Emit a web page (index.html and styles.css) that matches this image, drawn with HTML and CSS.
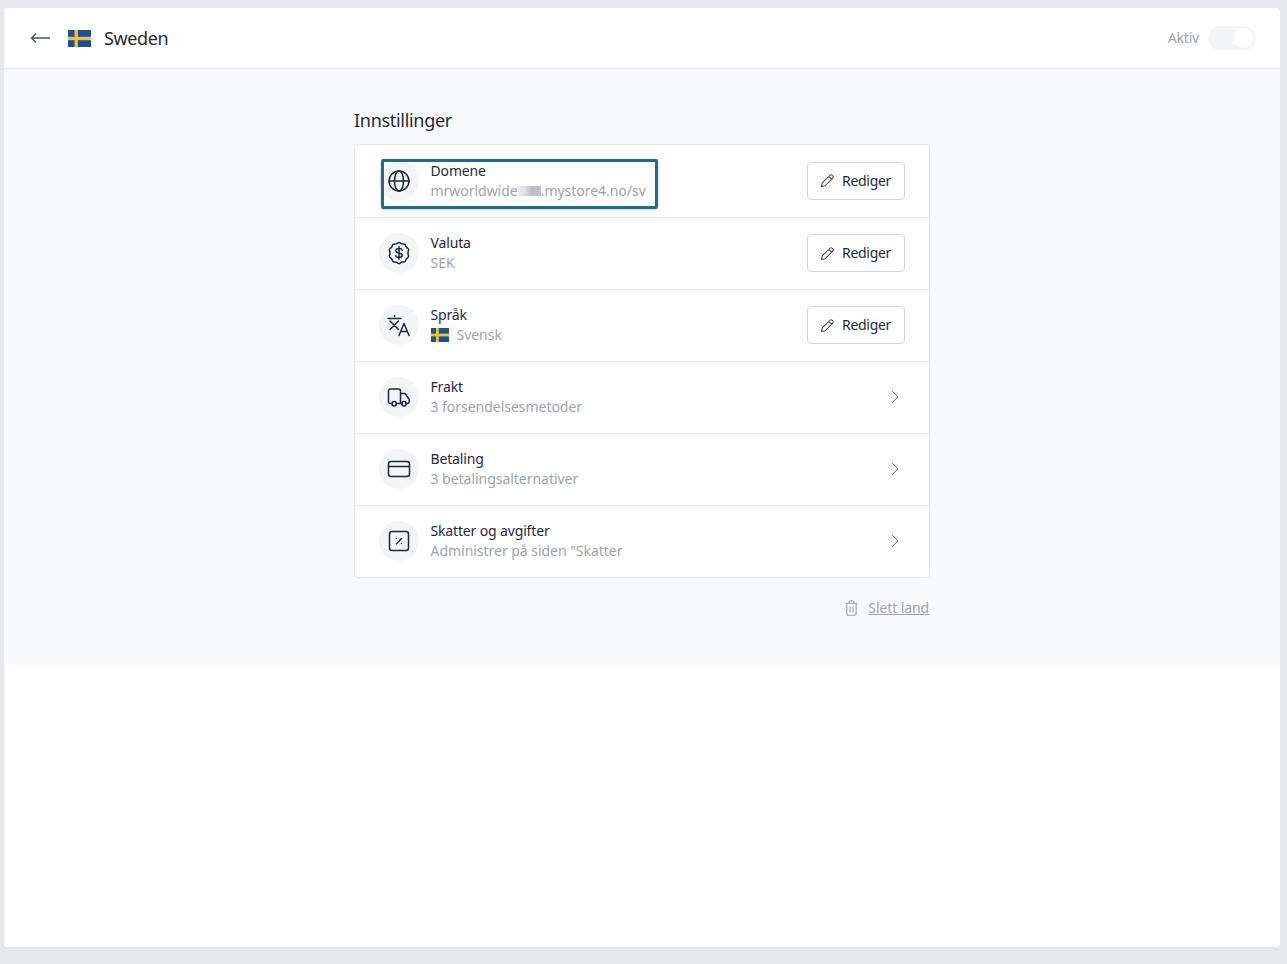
FILE: index.html
```html
<!DOCTYPE html>
<html lang="no">
<head>
<meta charset="utf-8">
<title>Sweden</title>
<link rel="stylesheet" href="styles.css">
</head>
<body>
<div class="panel">
  <header class="topbar">
    <div class="topbar-left">
      <svg class="back" width="20" height="12" viewBox="0 0 20 12" fill="none" stroke="#4b5563" stroke-width="1.5"><path d="M20 6H1.5M6 1.500 1.500 6 6 10.500"/></svg>
      <svg class="flag-lg" viewBox="0 0 23 17"><rect width="23" height="17" fill="#1f4f91"/><rect x="6.500" width="3.400" height="17" fill="#f2c230"/><rect y="6.800" width="23" height="3.400" fill="#f2c230"/></svg>
      <span class="country">Sweden</span>
    </div>
    <div class="topbar-right">
      <span class="active-label">Aktiv</span>
      <span class="toggle"><span class="knob"></span></span>
    </div>
  </header>
  <main class="content">
    <div class="column">
      <h2 class="heading">Innstillinger</h2>
      <div class="card">
        <div class="row">
          <span class="icon-wrap"><svg class="icon" viewBox="0 0 24 24"><circle cx="12" cy="12" r="10"/><ellipse cx="12" cy="12" rx="4.500" ry="10"/><path d="M2 12h20"/></svg></span>
          <div class="text">
            <div class="title">Domene</div>
            <div class="sub">mrworldwide<span class="blur"></span>.mystore4.no/sv</div>
          </div>
          <button class="edit"><svg class="pen" viewBox="0 0 16 16"><path d="M1.500 14.500l.9-3.900 8.200-8.200a1.700 1.700 0 0 1 2.400 0l.6.600a1.700 1.700 0 0 1 0 2.400l-8.200 8.200-3.900.9zM9.400 3.600l3 3"/></svg>Rediger</button>
          <span class="highlight"></span>
        </div>
        <div class="row">
          <span class="icon-wrap"><svg class="icon" viewBox="0 0 24 24"><path d="M12 1.500c1 0 1.800 1.100 2.800 1.400 1 .3 2.300-.1 3.100.5.800.6.800 1.900 1.400 2.700.6.800 1.900 1.200 2.200 2.200.3 1-.5 2.100-.5 3.700s.8 2.700.5 3.700c-.3 1-1.600 1.400-2.200 2.200-.6.800-.6 2.100-1.400 2.700-.8.600-2.100.200-3.100.5-1 .3-1.800 1.400-2.800 1.400s-1.800-1.100-2.800-1.400c-1-.3-2.300.1-3.100-.5-.8-.6-.8-1.900-1.400-2.700-.6-.8-1.900-1.200-2.200-2.200-.3-1 .5-2.100.5-3.700s-.8-2.700-.5-3.700c.3-1 1.600-1.400 2.200-2.200.6-.8.6-2.100 1.400-2.700.8-.6 2.100-.2 3.100-.5 1-.3 1.800-1.400 2.800-1.400z"/><path d="M15.200 9.200c-.4-1.100-1.700-1.700-3.200-1.700-1.800 0-3.200.9-3.200 2.200 0 3 6.400 1.600 6.400 4.600 0 1.300-1.400 2.200-3.200 2.200-1.500 0-2.800-.6-3.200-1.700M12 5.800v12.400"/></svg></span>
          <div class="text">
            <div class="title">Valuta</div>
            <div class="sub">SEK</div>
          </div>
          <button class="edit"><svg class="pen" viewBox="0 0 16 16"><path d="M1.500 14.500l.9-3.900 8.200-8.200a1.700 1.700 0 0 1 2.400 0l.6.600a1.700 1.700 0 0 1 0 2.400l-8.200 8.200-3.900.9zM9.400 3.600l3 3"/></svg>Rediger</button>
        </div>
        <div class="row">
          <span class="icon-wrap"><svg class="icon" viewBox="0 0 24 24"><path d="M1 5.500h13M7.500 2.500v1M3 8l8.500 8.500M11.500 8 3 16.500M12 22.500l5-12 5 12M13.800 18.500h6.400"/></svg></span>
          <div class="text">
            <div class="title">Språk</div>
            <div class="sub sub-flag"><svg class="flag-sm" viewBox="0 0 18 14"><rect width="18" height="14" fill="#1f4f91"/><rect x="5" width="2.800" height="14" fill="#f2c230"/><rect y="5.600" width="18" height="2.800" fill="#f2c230"/></svg>Svensk</div>
          </div>
          <button class="edit"><svg class="pen" viewBox="0 0 16 16"><path d="M1.500 14.500l.9-3.900 8.200-8.200a1.700 1.700 0 0 1 2.400 0l.6.600a1.700 1.700 0 0 1 0 2.400l-8.200 8.200-3.900.9zM9.400 3.600l3 3"/></svg>Rediger</button>
        </div>
        <div class="row">
          <span class="icon-wrap"><svg class="icon" viewBox="0 0 24 24"><path d="M5 18.500H3.500A2 2 0 0 1 1.500 16.500V6A2 2 0 0 1 3.500 4h8A2 2 0 0 1 13.500 6v12.500H9.500M13.500 8.500h3.600a2 2 0 0 1 1.700 1l3 4.300a2 2 0 0 1 .4 1.200v1.500a2 2 0 0 1-2 2h-1.200M14.500 18.500h.5"/><circle cx="7.200" cy="18.800" r="2.200"/><circle cx="17" cy="18.800" r="2.200"/></svg></span>
          <div class="text">
            <div class="title">Frakt</div>
            <div class="sub">3 forsendelsesmetoder</div>
          </div>
          <svg class="chevron" viewBox="0 0 10 14"><path d="M2 1l6 6-6 6"/></svg>
        </div>
        <div class="row">
          <span class="icon-wrap"><svg class="icon" viewBox="0 0 24 24"><rect x="1.500" y="4.500" width="21" height="15" rx="2.500"/><path d="M1.500 9.500h21"/></svg></span>
          <div class="text">
            <div class="title">Betaling</div>
            <div class="sub">3 betalingsalternativer</div>
          </div>
          <svg class="chevron" viewBox="0 0 10 14"><path d="M2 1l6 6-6 6"/></svg>
        </div>
        <div class="row">
          <span class="icon-wrap"><svg class="icon" viewBox="0 0 24 24"><rect x="2.500" y="2.500" width="19" height="19" rx="2.500"/><path d="M9.500 14.800l5-5.300M9.500 9.600h.01M14.500 14.600h.01"/></svg></span>
          <div class="text">
            <div class="title">Skatter og avgifter</div>
            <div class="sub">Administrer på siden "Skatter</div>
          </div>
          <svg class="chevron" viewBox="0 0 10 14"><path d="M2 1l6 6-6 6"/></svg>
        </div>
      </div>
      <div class="footer-action">
        <svg class="trash" viewBox="0 0 13 16"><path d="M.5 3.500h12M4.200 3.500V1.900a1 1 0 0 1 1-1h2.600a1 1 0 0 1 1 1v1.600M1.800 3.500v10.100a1.700 1.700 0 0 0 1.700 1.700h6a1.700 1.700 0 0 0 1.700-1.700V3.500M5 6.500v6M8 6.500v6"/></svg>
        <a class="delete" href="#">Slett land</a>
      </div>
    </div>
  </main>
</div>
</body>
</html>
```
FILE: styles.css
```css
* { box-sizing: border-box; }
html, body { height: 100%; }
body {
  margin: 0;
  padding: 8px 7px 17px 4px;
  background: #e5e7eb;
  font-family: "Noto Sans", "Open Sans", sans-serif;
  color: #1f2937;
  overflow: hidden;
}
.panel {
  height: 939px;
  background: #fff;
  border-radius: 4px;
  overflow: hidden;
}
.topbar {
  height: 61px;
  padding: 0 24px 1px 26px;
  display: flex;
  align-items: center;
  justify-content: space-between;
  border-bottom: 1px solid #e5e7eb;
}
.topbar-left { display: flex; align-items: center; }
.back { margin-right: 18px; }
.flag-lg { width: 23px; height: 17px; margin: 1px 13px 0 0; }
.country { font-size: 18px; line-height: 24px; color: #1f2937; letter-spacing: -0.4px; }
.topbar-right { display: flex; align-items: center; gap: 9px; }
.active-label { font-size: 14px; color: #9ca3af; letter-spacing: -0.2px; }
.toggle {
  width: 48px;
  height: 24px;
  border-radius: 12px;
  background: #f3f4f6;
  display: flex;
  justify-content: flex-end;
  padding: 2px 3px;
}
.knob { width: 20px; height: 20px; border-radius: 50%; background: #fff; }
.content {
  height: 597px;
  background: #f9fafb;
  display: flex;
  justify-content: center;
  padding-top: 39px;
}
.column { width: 576px; }
.heading {
  margin: 0 0 12px;
  font-size: 18px;
  line-height: 24px;
  font-weight: 400;
  color: #1f2937;
  letter-spacing: -0.3px;
}
.card {
  background: #fff;
  border: 1px solid #e5e7eb;
  border-radius: 4px;
}
.row {
  position: relative;
  height: 72px;
  display: flex;
  align-items: center;
  padding: 0 24px 1px;
  border-bottom: 1px solid #e5e7eb;
}
.row:first-child { height: 73px; }
.row:last-child { height: 71px; border-bottom: 0; }
.icon-wrap {
  width: 40px;
  height: 40px;
  border-radius: 50%;
  background: #f3f4f6;
  display: flex;
  align-items: center;
  justify-content: center;
  margin-right: 11.5px;
  flex: none;
}
.icon {
  width: 24px;
  height: 24px;
  fill: none;
  stroke: #1f2937;
  stroke-width: 1.500;
  stroke-linecap: round;
  stroke-linejoin: round;
}
.text { flex: 1; }
.title { font-size: 14px; line-height: 20px; color: #1f2937; letter-spacing: -0.15px; }
.sub { font-size: 14px; line-height: 20px; color: #9ca3af; letter-spacing: -0.03px; }
.sub-flag { display: flex; align-items: center; }
.flag-sm { width: 18px; height: 14px; margin-right: 8px; }
.blur {
  display: inline-block;
  width: 23px;
  height: 10px;
  background: linear-gradient(90deg, #eceef1 0%, #dfe1e7 30%, #b9bcc9 60%, #c0c3cf 100%);
}
.edit {
  display: flex;
  align-items: center;
  width: 98px;
  height: 38px;
  padding: 0 0 0 12px;
  background: #fff;
  border: 1px solid #d1d5db;
  border-radius: 4px;
  font: inherit;
  font-size: 14px;
  line-height: 20px;
  letter-spacing: -0.3px;
  color: #1f2937;
}
.pen {
  width: 15px;
  height: 15px;
  margin-right: 7px;
  fill: none;
  stroke: #374151;
  stroke-width: 1.100;
  stroke-linejoin: round;
}
.chevron {
  width: 10px;
  height: 14px;
  margin-right: 5px;
  fill: none;
  stroke: #6b7280;
  stroke-width: 1;
}
.highlight {
  position: absolute;
  left: 26px;
  top: 14px;
  width: 277px;
  height: 50px;
  border: 3px solid #236a85;
  border-radius: 2px;
  box-shadow: 0 1px 3px rgba(0, 0, 0, 0.2);
}
.footer-action {
  display: flex;
  justify-content: flex-end;
  align-items: center;
  margin-top: 20px;
  padding-right: 1px;
}
.trash {
  width: 13px;
  height: 16px;
  margin-right: 10px;
  fill: none;
  stroke: #9ca3af;
  stroke-width: 1.100;
}
.delete { font-size: 14px; line-height: 20px; color: #9ca3af; text-decoration: underline; letter-spacing: -0.1px; }
```
